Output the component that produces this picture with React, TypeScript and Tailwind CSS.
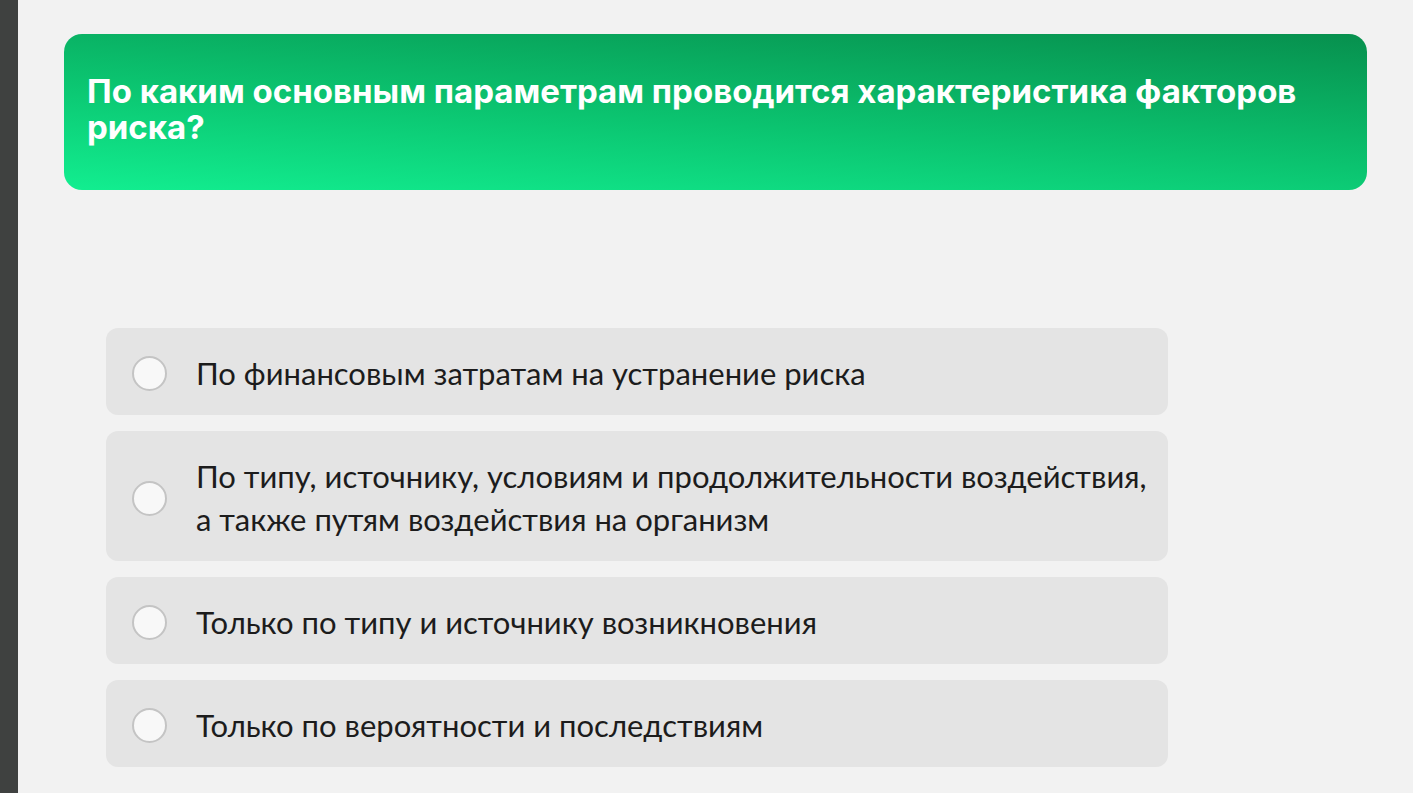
import React from "react";

const options: React.ReactNode[] = [
  "По финансовым затратам на устранение риска",
  <>
    По типу, источнику, условиям и продолжительности воздействия,
    <br />а также путям воздействия на организм
  </>,
  "Только по типу и источнику возникновения",
  "Только по вероятности и последствиям",
];

export default function App() {
  return (
    <div className="relative flex min-h-[793px] w-full bg-[#f2f2f2]">
      <div className="w-[18px] shrink-0 bg-[#3f4140]" />
      <div className="flex-1 pl-[46px] pr-[46px] pt-[34px]">
        <div className="rounded-[18px] bg-[linear-gradient(184deg,#07904e_0%,#0bc470_55%,#12ee90_100%)] pb-[45px] pl-[23px] pr-[40px] pt-[39px]">
          <h1 className="font-['Inter',sans-serif] text-[33px] font-bold leading-[36px] text-white">
            По каким основным параметрам проводится характеристика факторов риска?
          </h1>
        </div>
        <div className="ml-[42px] mt-[138px] flex w-[1062px] flex-col gap-[16px]">
          {options.map((o, i) => (
            <div key={i} className="flex items-center rounded-[12px] bg-[#e4e4e4] pb-[20px] pl-[26px] pr-[16px] pt-[24px]">
              <div className="h-[35px] w-[35px] shrink-0 rounded-full border-2 border-[#c4c4c4] bg-[#f8f8f8]" />
              <div className="ml-[29px] whitespace-nowrap font-['Lato',sans-serif] text-[31px] font-normal leading-[43px] text-[#1c1c1c]">
                {o}
              </div>
            </div>
          ))}
        </div>
      </div>
    </div>
  );
}
